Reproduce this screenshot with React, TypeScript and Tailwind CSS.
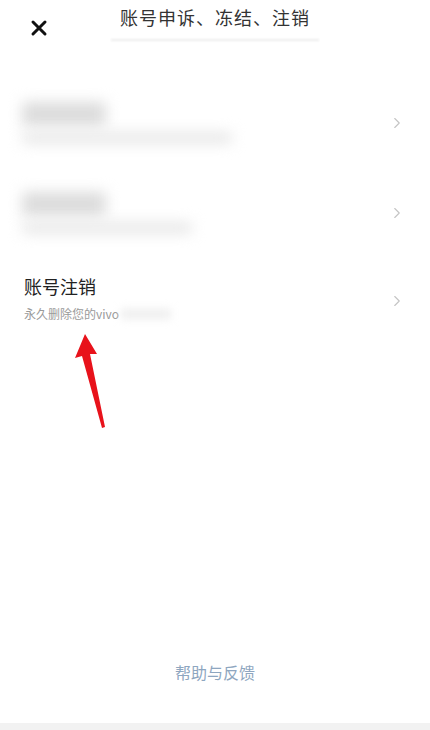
import { ChevronRight } from "lucide-react";

const font = { fontFamily: '"Noto Sans CJK SC", "Noto Sans", sans-serif' };

const BlurRow = ({ titleW, subW }: { titleW: string; subW: string }) => (
  <div className="flex items-center pl-[22px] pr-[24px] h-[90px]">
    <div className="flex-1 flex flex-col gap-[6px]">
      <div className={`h-[24px] ${titleW} bg-[#dcdcdc] rounded blur-[7px]`} />
      <div className={`h-[12px] ${subW} bg-[#e8e8e8] rounded blur-[7px]`} />
    </div>
    <ChevronRight className="w-[18px] h-[18px] text-[#c4c4c4]" strokeWidth={1.5} />
  </div>
);

export default function App() {
  return (
    <div className="relative w-[430px] h-[730px] bg-white flex flex-col overflow-hidden" style={font}>
      <div className="relative h-[56px] flex items-center">
        <svg className="absolute left-[30px] top-[19px]" width="18" height="18" viewBox="0 0 18 18">
          <path d="M3 3L15 15M15 3L3 15" stroke="#111" strokeWidth="3" strokeLinecap="round" />
        </svg>
        <div className="mx-auto mt-[-12px] flex flex-col items-center">
          <span className="text-[18px] text-[#333] tracking-[1px]">账号申诉、冻结、注销</span>
          <div className="mt-[8px] h-[2px] w-[208px] bg-[#ececec] blur-[1px]" />
        </div>
      </div>

      <div className="mt-[22px]">
        <BlurRow titleW="w-[84px]" subW="w-[210px]" />
        <BlurRow titleW="w-[84px]" subW="w-[170px]" />
        <div className="flex items-center pl-[24px] pr-[24px] h-[90px] mt-[-2px]">
          <div className="flex-1 flex flex-col gap-[8px] mt-[-6px]">
            <span className="text-[18px] text-[#222] leading-[24px]">账号注销</span>
            <div className="flex items-center">
              <span className="text-[12px] text-[#9a9a9a] leading-[16px]">永久删除您的vivo</span>
              <div className="h-[10px] w-[50px] bg-[#eeeeee] blur-[4px] ml-[2px]" />
            </div>
          </div>
          <ChevronRight className="w-[18px] h-[18px] text-[#c4c4c4]" strokeWidth={1.5} />
        </div>
      </div>

      <svg className="absolute left-[70px] top-[330px]" width="50" height="105" viewBox="0 0 50 105">
        <path d="M15 4 L5 28 L12 26 L32 98 L35 97 L20 24 L27 24 Z" fill="#e8121b" />
      </svg>

      <div className="mt-auto mb-[46px] text-center text-[16px] text-[#8ea6c0]">帮助与反馈</div>
      <div className="absolute bottom-0 left-0 right-0 h-[7px] bg-[#f2f2f2]" />
    </div>
  );
}
